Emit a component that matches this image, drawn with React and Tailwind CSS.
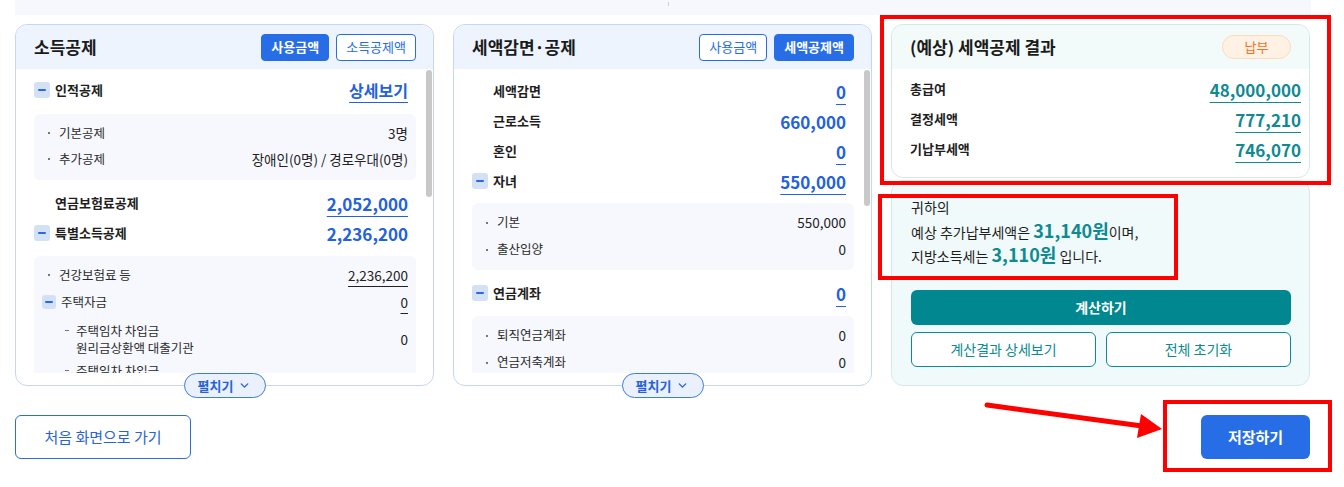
import React from 'react';
import { ChevronDown } from 'lucide-react';

const Minus = ({ small }) => (
  <span
    className={
      'flex shrink-0 items-center justify-center rounded-[3px] bg-[#d3e0f5] ' +
      (small ? 'h-[14px] w-[14px]' : 'h-[16px] w-[16px]')
    }
  >
    <span className="h-[2px] w-[8px] rounded-[1px] bg-[#2a69e4]" />
  </span>
);

const Dot = () => <span className="mr-[9px] h-[2px] w-[2px] shrink-0 bg-[#777]" />;

const blueLink =
  'text-[17px] font-bold leading-none text-[#2461dc] underline decoration-1 underline-offset-[5px]';
const blueNum = 'text-[17px] font-bold leading-none text-[#2461dc]';
const tealLink =
  'text-[17px] font-bold leading-none text-[#0f8a93] underline decoration-1 underline-offset-[5px]';

const Row = ({ minus, label, value, valueClass, indent }) => (
  <div className="flex h-[30px] items-center justify-between pr-[8px]">
    <div className={'flex items-center ' + (indent ? 'pl-[21px]' : '')}>
      {minus && <Minus />}
      <span className={'text-[13px] font-semibold text-[#1e1e1e] ' + (minus ? 'ml-[5px]' : '')}>{label}</span>
    </div>
    <span className={valueClass}>{value}</span>
  </div>
);

const SubRow = ({ label, value, h = 'h-[26px]', underline }) => (
  <div className={'flex items-center justify-between ' + h}>
    <div className="flex items-center">
      <Dot />
      <span className="text-[12.5px] text-[#2b2b2b]">{label}</span>
    </div>
    <span
      className={
        'text-[13.5px] text-[#222] ' + (underline ? 'underline decoration-1 underline-offset-[5px]' : '')
      }
    >
      {value}
    </span>
  </div>
);

const TabButtons = ({ active, second }) => (
  <div className="flex gap-[7px]">
    <button
      className={
        'h-[27px] rounded-[4px] border border-[#276de6] px-[9px] text-[13px] ' +
        (active === 0 ? 'bg-[#276de6] font-semibold text-white' : 'bg-white text-[#276de6]')
      }
    >
      사용금액
    </button>
    <button
      className={
        'h-[27px] rounded-[4px] border border-[#276de6] px-[9px] text-[13px] ' +
        (active === 1 ? 'bg-[#276de6] font-semibold text-white' : 'bg-white text-[#276de6]')
      }
    >
      {second}
    </button>
  </div>
);

const Card = ({ title, active, second, thumb, children }) => (
  <div className="relative flex h-[362px] w-[419px] flex-col rounded-[12px] border border-[#c4d6f3] bg-white">
    <div className="flex h-[44px] shrink-0 items-center justify-between rounded-t-[12px] bg-[#eef4fd] pl-[18px] pr-[17px]">
      <h2 className="text-[17px] font-bold text-[#1b1b1b]">{title}</h2>
      <TabButtons active={active} second={second} />
    </div>
    <div className="flex min-h-0 flex-1 pb-[12px]">
      <div className="min-h-0 flex-1 overflow-hidden pl-[18px] pr-[10px]">{children}</div>
      <div className="mr-[1px] w-[6px] pt-[1px]">
        <div className={'rounded-full bg-[#c8c8c8] ' + thumb} />
      </div>
    </div>
    <button className="absolute bottom-[-13px] left-1/2 flex h-[25px] w-[82px] -translate-x-1/2 items-center justify-center gap-[5px] rounded-full border border-[#3d7ce8] bg-[#eaf1fd] text-[13px] font-semibold text-[#2763d8]">
      펼치기
      <ChevronDown size={13} strokeWidth={2.6} />
    </button>
  </div>
);

const IncomeCard = () => (
  <Card title="소득공제" active={0} second="소득공제액" thumb="h-[127px]">
    <div className="pt-[6px]">
      <Row minus label="인적공제" value="상세보기" valueClass="text-[16px] font-bold leading-none text-[#2461dc] underline decoration-1 underline-offset-[5px]" />
      <div className="mt-[9px] rounded-[6px] bg-[#f6f8fd] pb-[8px] pl-[14px] pr-[8px] pt-[6px]">
        <SubRow label="기본공제" value="3명" />
        <SubRow label="추가공제" value="장애인(0명) / 경로우대(0명)" />
      </div>
      <div className="mt-[8px]">
        <Row indent label="연금보험료공제" value="2,052,000" valueClass={blueLink} />
        <Row minus label="특별소득공제" value="2,236,200" valueClass={blueNum} />
      </div>
      <div className="mt-[8px] rounded-[6px] bg-[#f6f8fd] pb-[20px] pl-[14px] pr-[8px] pt-[6px]">
        <SubRow label="건강보험료 등" value="2,236,200" underline />
        <div className="-ml-[6px] flex h-[28px] items-center justify-between">
          <div className="flex items-center">
            <Minus small />
            <span className="ml-[5px] text-[12.5px] text-[#2b2b2b]">주택자금</span>
          </div>
          <span className="text-[13.5px] text-[#222] underline decoration-1 underline-offset-[5px]">0</span>
        </div>
        <div className="flex items-center justify-between pb-[4px] pl-[17px] pt-[6px]">
          <div className="flex items-start">
            <span className="mr-[7px] mt-[8px] h-[1px] w-[4px] bg-[#777]" />
            <span className="text-[12.5px] leading-[17px] text-[#2b2b2b]">
              주택임차 차입금
              <br />
              원리금상환액 대출기관
            </span>
          </div>
          <span className="text-[13.5px] text-[#222]">0</span>
        </div>
        <div className="flex items-center justify-between pl-[17px] pt-[2px]">
          <div className="flex items-start">
            <span className="mr-[7px] mt-[8px] h-[1px] w-[4px] bg-[#777]" />
            <span className="text-[12.5px] leading-[17px] text-[#2b2b2b]">
              주택임차 차입금
              <br />
              이자상환액
            </span>
          </div>
          <span className="text-[13.5px] text-[#222]">0</span>
        </div>
      </div>
    </div>
  </Card>
);

const TaxCard = () => (
  <Card title="세액감면·공제" active={1} second="세액공제액" thumb="h-[136px]">
    <div className="pt-[7px]">
      <Row indent label="세액감면" value="0" valueClass={blueLink} />
      <Row indent label="근로소득" value="660,000" valueClass={blueNum} />
      <Row indent label="혼인" value="0" valueClass={blueLink} />
      <Row minus label="자녀" value="550,000" valueClass={blueLink} />
      <div className="mt-[7px] rounded-[6px] bg-[#f6f8fd] pb-[7px] pl-[14px] pr-[8px] pt-[6px]">
        <SubRow label="기본" value="550,000" h="h-[27px]" />
        <SubRow label="출산입양" value="0" h="h-[27px]" />
      </div>
      <div className="mt-[8px]">
        <Row minus label="연금계좌" value="0" valueClass={blueLink} />
      </div>
      <div className="mt-[8px] rounded-[6px] bg-[#f6f8fd] pb-[20px] pl-[14px] pr-[8px] pt-[6px]">
        <SubRow label="퇴직연금계좌" value="0" h="h-[27px]" />
        <SubRow label="연금저축계좌" value="0" h="h-[27px]" />
        <SubRow label="주택청약" value="0" h="h-[27px]" />
      </div>
    </div>
  </Card>
);

const ResultRow = ({ label, value }) => (
  <div className="flex h-[30px] items-center justify-between">
    <span className="text-[13px] font-semibold text-[#1e1e1e]">{label}</span>
    <span className={tealLink}>{value}</span>
  </div>
);

const ResultColumn = () => (
  <div className="flex w-[419px] flex-col gap-[2px]">
    <div className="h-[154px] rounded-[12px] border border-[#d3e8ec] bg-white">
      <div className="flex h-[44px] items-center justify-between rounded-t-[12px] bg-[#f2fafa] pl-[18px] pr-[18px]">
        <h2 className="text-[17px] font-bold text-[#1b1b1b]">(예상) 세액공제 결과</h2>
        <span className="flex h-[24px] w-[69px] items-center justify-center rounded-full border border-[#fcdcbc] bg-[#fff1e4] text-[13px] text-[#f4701c]">
          납부
        </span>
      </div>
      <div className="pl-[18px] pr-[8px] pt-[5px]">
        <ResultRow label="총급여" value="48,000,000" />
        <ResultRow label="결정세액" value="777,210" />
        <ResultRow label="기납부세액" value="746,070" />
      </div>
    </div>
    <div className="h-[206px] rounded-[12px] border border-[#d6eaee] bg-[#f1fafa] pl-[19px] pr-[18px] pt-[14px]">
      <p className="text-[14px] leading-[24.5px] text-[#1e1e1e]">
        귀하의
        <br />
        예상 추가납부세액은 <span className="text-[18px] font-bold leading-none text-[#0f8a93]">31,140원</span>이며,
        <br />
        지방소득세는 <span className="text-[18px] font-bold leading-none text-[#0f8a93]">3,110원</span> 입니다.
      </p>
      <button className="mt-[21px] h-[35px] w-full rounded-[6px] bg-[#00878f] text-[14px] font-bold text-white">
        계산하기
      </button>
      <div className="mt-[7px] flex gap-[10px]">
        <button className="h-[35px] flex-1 rounded-[6px] border border-[#0a8a91] bg-white text-[14px] text-[#0a8a91]">
          계산결과 상세보기
        </button>
        <button className="h-[35px] flex-1 rounded-[6px] border border-[#0a8a91] bg-white text-[14px] text-[#0a8a91]">
          전체 초기화
        </button>
      </div>
    </div>
  </div>
);

const Annotations = () => (
  <>
    <div className="pointer-events-none absolute left-[880px] top-[15px] h-[170px] w-[451px] border-4 border-[#ff0000]" />
    <div className="pointer-events-none absolute left-[878px] top-[194px] h-[86px] w-[300px] border-4 border-[#ff0000]" />
    <div className="pointer-events-none absolute left-[1163px] top-[400px] h-[72px] w-[169px] border-4 border-[#ff0000]" />
    <svg className="pointer-events-none absolute left-0 top-0" width="1344" height="487">
      <line x1="987" y1="405" x2="1142" y2="426" stroke="#ff0000" strokeWidth="5" strokeLinecap="round" />
      <polygon points="1162,429 1141,414 1137,438" fill="#ff0000" />
    </svg>
  </>
);

const App = () => {
  return (
    <div className="relative h-[487px] w-[1344px] overflow-hidden bg-white font-['Noto_Sans_CJK_KR','Noto_Sans',sans-serif]">
      <div className="w-[1310px] pl-[15px]">
        <div className="h-[15px] w-[1296px] bg-[#f6f8fd] pl-[653px] pt-[2px]">
          <div className="h-[4px] w-[1px] bg-[#c9ced8]" />
        </div>
        <div className="mt-[9px] flex gap-[19px]">
          <IncomeCard />
          <TaxCard />
          <ResultColumn />
        </div>
        <div className="mt-[29px] flex items-center justify-between">
          <button className="h-[44px] w-[176px] rounded-[6px] border border-[#2b6be6] bg-white text-[15px] text-[#2763d8]">
            처음 화면으로 가기
          </button>
          <button className="h-[44px] w-[109px] rounded-[6px] bg-[#276de6] text-[15px] font-semibold text-white">
            저장하기
          </button>
        </div>
      </div>
      <Annotations />
    </div>
  );
};

export default App;
